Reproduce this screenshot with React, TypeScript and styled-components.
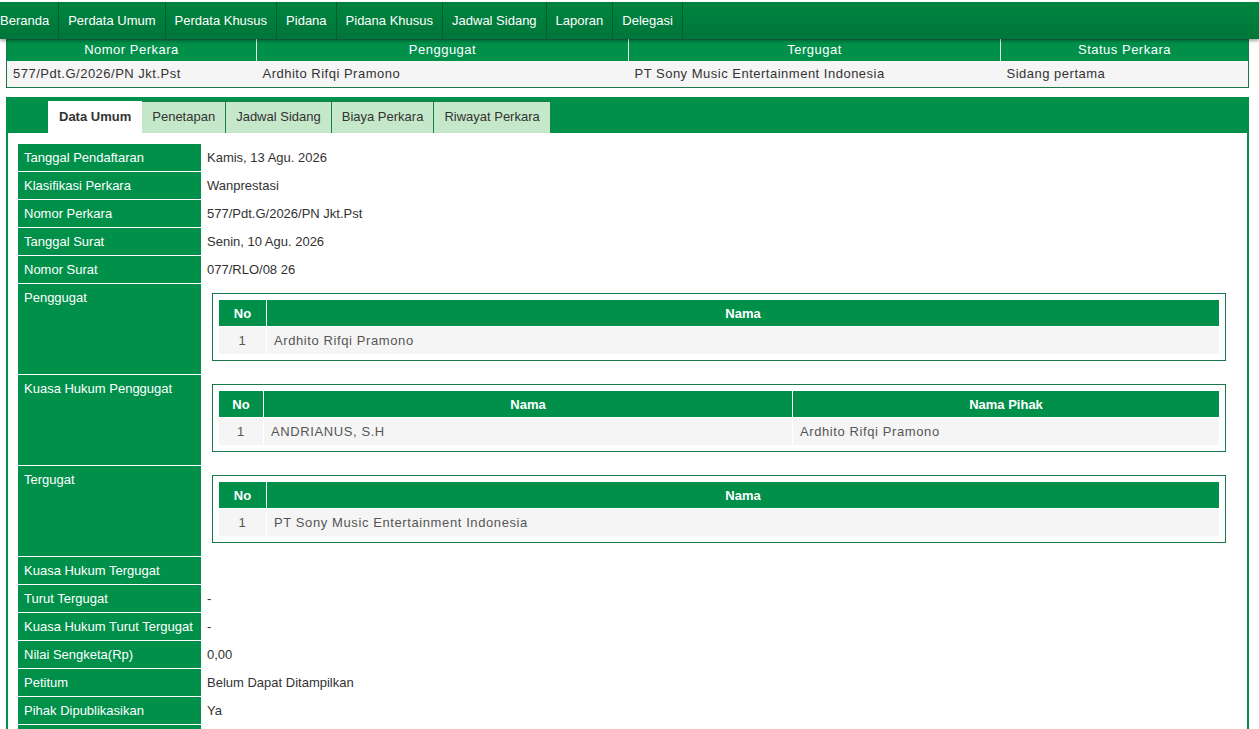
import React from "react";
import styled, { createGlobalStyle } from "styled-components";

const GREEN = "#00904a";
const LINE = "#17784a";

const GlobalStyle = createGlobalStyle`
  html, body {
    margin: 0;
    padding: 0;
    background: #fff;
    font-family: "Liberation Sans", Arial, Helvetica, sans-serif;
    font-size: 13px;
    color: #333;
  }
`;

const NavBar = styled.nav`
  position: relative;
  z-index: 2;
  margin-top: 2px;
  height: 37px;
  display: flex;
  background: linear-gradient(#00843f, #00763a);
  box-shadow: 0 2px 3px rgba(0, 0, 0, 0.35);
`;

const NavList = styled.ul`
  display: flex;
  list-style: none;
  margin: 0 0 0 -9px;
  padding: 0;
`;

const NavItem = styled.li`
  display: flex;
  align-items: center;
  padding: 0 9px;
  color: #fff;
  border-right: 1px solid #005f2d;
  white-space: nowrap;
`;

const Page = styled.div`
  padding: 0 10px 0 6px;
`;

const SummaryTable = styled.table`
  width: 100%;
  table-layout: fixed;
  border-collapse: collapse;
  border: 1px solid ${LINE};
  letter-spacing: 0.5px;
`;

const SumHead = styled.th<{ $w?: number }>`
  ${(p) => (p.$w ? `width: ${p.$w}px;` : "")}
  background: ${GREEN};
  color: #fff;
  font-weight: normal;
  line-height: 16px;
  padding: 2px 6px 3px;
  border-left: 1px solid #e6f3ea;
  &:first-child {
    border-left: none;
  }
`;

const SumCell = styled.td`
  background: #f5f5f5;
  line-height: 16px;
  padding: 5px 6px;
  color: #333;
  white-space: nowrap;
  overflow: hidden;
`;

const Panel = styled.section`
  margin-top: 9px;
  border: 2px solid ${GREEN};
  border-top: none;
  border-bottom: none;
  min-height: 640px;
`;

const TabBar = styled.div`
  display: flex;
  align-items: flex-end;
  height: 36px;
  padding-left: 40px;
  background: ${GREEN};
`;

const Tab = styled.div<{ $active?: boolean }>`
  height: 32px;
  box-sizing: border-box;
  display: flex;
  align-items: center;
  padding: 0 10px 3px;
  color: #333;
  font-weight: ${(p) => (p.$active ? "bold" : "normal")};
  background: ${(p) => (p.$active ? "#fff" : "#c4e8c9")};
  border: 1px solid ${(p) => (p.$active ? "#fff" : "#1b8046")};
  border-bottom: none;
  border-left-width: ${(p) => (p.$active ? "1px" : "0")};
`;

const PanelBody = styled.div`
  padding: 10px 10px 0;
`;

const InfoTable = styled.table`
  width: 100%;
  border-collapse: separate;
  border-spacing: 0 1px;
`;

const LabelCell = styled.td`
  width: 171px;
  background: ${GREEN};
  color: #fff;
  line-height: 15px;
  padding: 6px;
  vertical-align: top;
  white-space: nowrap;
`;

const ValueCell = styled.td`
  background: #fff;
  color: #333;
  line-height: 15px;
  padding: 6px;
  vertical-align: top;
`;

const PartyBox = styled.div`
  margin: 3px 5px 7px;
  padding: 5px;
  border: 1px solid ${LINE};
`;

const PartyTable = styled.table`
  width: 100%;
  border-collapse: separate;
  border-spacing: 1px;
  letter-spacing: 0.6px;
`;

const PartyHead = styled.th<{ $w?: number }>`
  ${(p) => (p.$w ? `width: ${p.$w}px;` : "")}
  height: 26px;
  padding: 0 7px;
  background: ${GREEN};
  color: #fff;
  font-weight: bold;
  letter-spacing: 0;
  text-align: center;
`;

const PartyCell = styled.td<{ $center?: boolean }>`
  height: 27px;
  padding: 0 7px;
  background: #f5f5f5;
  color: #555;
  text-align: ${(p) => (p.$center ? "center" : "left")};
`;

type Party = { cols: { title: string; w?: number }[]; rows: string[][] };

const PartyList = ({ cols, rows }: Party) => (
  <PartyBox>
    <PartyTable>
      <thead>
        <tr>
          {cols.map((c) => (
            <PartyHead key={c.title} $w={c.w}>
              {c.title}
            </PartyHead>
          ))}
        </tr>
      </thead>
      <tbody>
        {rows.map((r, i) => (
          <tr key={i}>
            {r.map((v, j) => (
              <PartyCell key={j} $center={j === 0}>
                {v}
              </PartyCell>
            ))}
          </tr>
        ))}
      </tbody>
    </PartyTable>
  </PartyBox>
);

const menu = [
  "Beranda",
  "Perdata Umum",
  "Perdata Khusus",
  "Pidana",
  "Pidana Khusus",
  "Jadwal Sidang",
  "Laporan",
  "Delegasi",
];

const tabs = ["Data Umum", "Penetapan", "Jadwal Sidang", "Biaya Perkara", "Riwayat Perkara"];

type Row = { label: string; value?: string; party?: Party };

const info: Row[] = [
  { label: "Tanggal Pendaftaran", value: "Kamis, 13 Agu. 2026" },
  { label: "Klasifikasi Perkara", value: "Wanprestasi" },
  { label: "Nomor Perkara", value: "577/Pdt.G/2026/PN Jkt.Pst" },
  { label: "Tanggal Surat", value: "Senin, 10 Agu. 2026" },
  { label: "Nomor Surat", value: "077/RLO/08 26" },
  {
    label: "Penggugat",
    party: {
      cols: [{ title: "No", w: 33 }, { title: "Nama" }],
      rows: [["1", "Ardhito Rifqi Pramono"]],
    },
  },
  {
    label: "Kuasa Hukum Penggugat",
    party: {
      cols: [{ title: "No", w: 30 }, { title: "Nama" }, { title: "Nama Pihak", w: 412 }],
      rows: [["1", "ANDRIANUS, S.H", "Ardhito Rifqi Pramono"]],
    },
  },
  {
    label: "Tergugat",
    party: {
      cols: [{ title: "No", w: 33 }, { title: "Nama" }],
      rows: [["1", "PT Sony Music Entertainment Indonesia"]],
    },
  },
  { label: "Kuasa Hukum Tergugat", value: "" },
  { label: "Turut Tergugat", value: "-" },
  { label: "Kuasa Hukum Turut Tergugat", value: "-" },
  { label: "Nilai Sengketa(Rp)", value: "0,00" },
  { label: "Petitum", value: "Belum Dapat Ditampilkan" },
  { label: "Pihak Dipublikasikan", value: "Ya" },
  { label: "Prodeo", value: "Tidak" },
];

export default function App() {
  return (
    <>
      <GlobalStyle />
      <NavBar>
        <NavList>
          {menu.map((m) => (
            <NavItem key={m}>{m}</NavItem>
          ))}
        </NavList>
      </NavBar>
      <Page>
        <SummaryTable>
          <thead>
            <tr>
              <SumHead $w={237}>Nomor Perkara</SumHead>
              <SumHead $w={359}>Penggugat</SumHead>
              <SumHead $w={359}>Tergugat</SumHead>
              <SumHead>Status Perkara</SumHead>
            </tr>
          </thead>
          <tbody>
            <tr>
              <SumCell>577/Pdt.G/2026/PN Jkt.Pst</SumCell>
              <SumCell>Ardhito Rifqi Pramono</SumCell>
              <SumCell>PT Sony Music Entertainment Indonesia</SumCell>
              <SumCell>Sidang pertama</SumCell>
            </tr>
          </tbody>
        </SummaryTable>

        <Panel>
          <TabBar>
            {tabs.map((t, i) => (
              <Tab key={t} $active={i === 0}>
                {t}
              </Tab>
            ))}
          </TabBar>
          <PanelBody>
            <InfoTable>
              <tbody>
                {info.map((r) => (
                  <tr key={r.label}>
                    <LabelCell>{r.label}</LabelCell>
                    <ValueCell>{r.party ? <PartyList {...r.party} /> : r.value}</ValueCell>
                  </tr>
                ))}
              </tbody>
            </InfoTable>
          </PanelBody>
        </Panel>
      </Page>
    </>
  );
}
